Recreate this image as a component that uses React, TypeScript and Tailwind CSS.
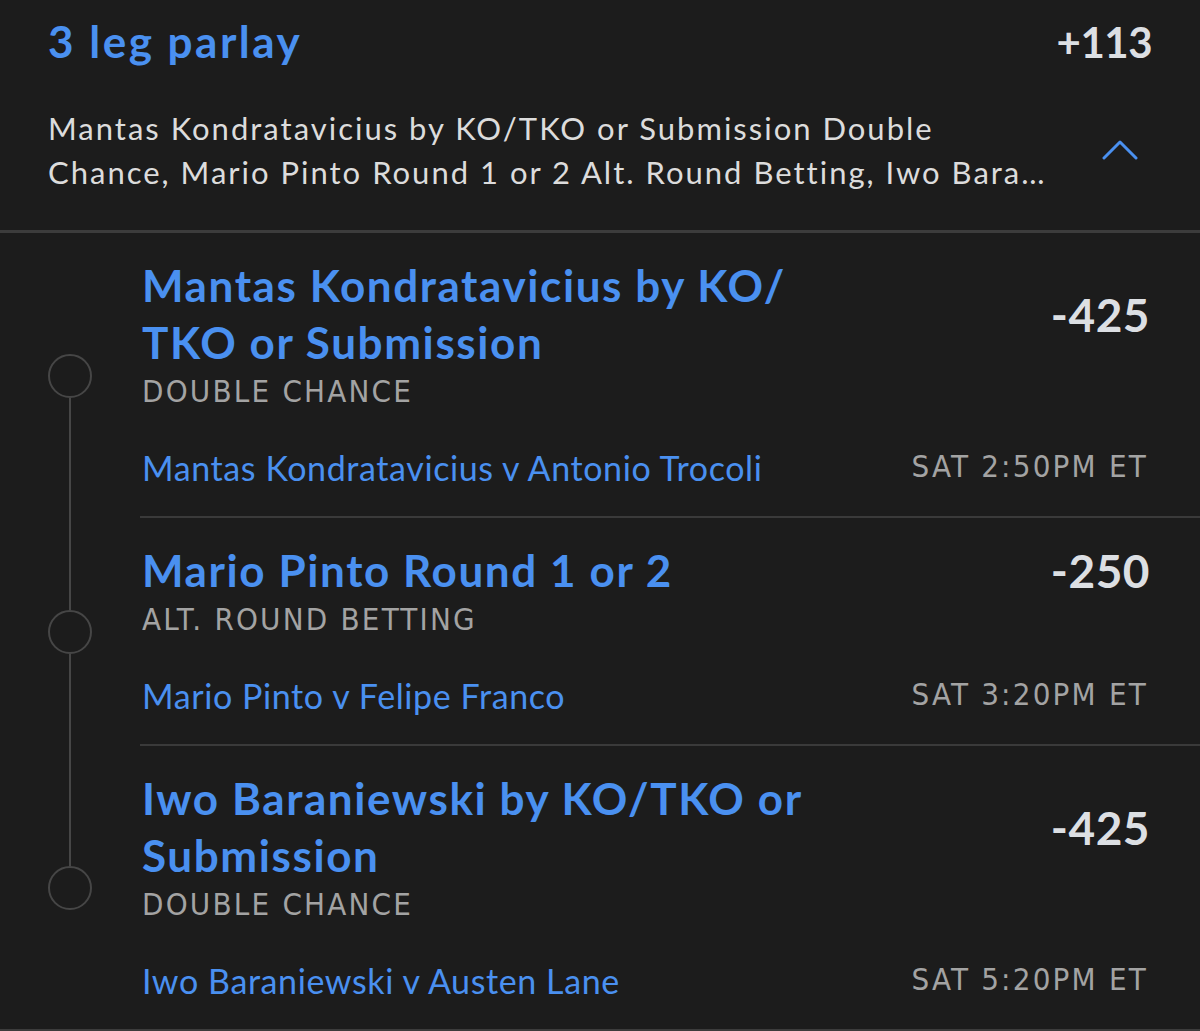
interface Leg {
  title: string;
  market: string;
  matchup: string;
  time: string;
  odds: string;
}

const legs: Leg[] = [
  {
    title: "Mantas Kondratavicius by KO/ TKO or Submission",
    market: "DOUBLE CHANCE",
    matchup: "Mantas Kondratavicius v Antonio Trocoli",
    time: "SAT 2:50PM ET",
    odds: "-425",
  },
  {
    title: "Mario Pinto Round 1 or 2",
    market: "ALT. ROUND BETTING",
    matchup: "Mario Pinto v Felipe Franco",
    time: "SAT 3:20PM ET",
    odds: "-250",
  },
  {
    title: "Iwo Baraniewski by KO/TKO or Submission",
    market: "DOUBLE CHANCE",
    matchup: "Iwo Baraniewski v Austen Lane",
    time: "SAT 5:20PM ET",
    odds: "-425",
  },
];

const LegRow = ({ leg, first, last }: { leg: Leg; first: boolean; last: boolean }) => {
  return (
    <div className="flex">
      <div className="w-[140px] shrink-0 flex flex-col items-center">
        <div className={`flex-1 w-[2px] ${first ? "" : "bg-[#464646]"}`}></div>
        <div className="w-[44px] h-[44px] rounded-full border-2 border-[#464646] shrink-0"></div>
        <div className={`flex-1 w-[2px] ${last ? "" : "bg-[#464646]"}`}></div>
      </div>
      <div
        className={`flex-1 pl-[2px] pt-6 pb-[28px] ${
          last ? "" : "border-b-2 border-[#3a3a3a]"
        }`}
      >
        <div className="flex items-center justify-between pr-[50px]">
          <div className="max-w-[700px] text-[44px] leading-[57px] font-bold tracking-[1.6px] text-[#4a90f0]">
            {leg.title}
          </div>
          <div className="text-[46px] leading-[57px] font-bold text-[#dcdfe3] tracking-[0.5px]">
            {leg.odds}
          </div>
        </div>
        <div className="mt-[2px] font-['DejaVu_Sans_Condensed',sans-serif] text-[31px] leading-[36px] tracking-[2.2px] text-[#a3a3a3]">
          {leg.market}
        </div>
        <div className="mt-[39px] flex items-end justify-between pr-[52px]">
          <div className="text-[34px] leading-[40px] tracking-[0.6px] text-[#4a90f0]">{leg.matchup}</div>
          <div className="mb-[4px] font-['DejaVu_Sans_Condensed',sans-serif] text-[31px] leading-[36px] tracking-[2.2px] text-[#a3a3a3]">
            {leg.time}
          </div>
        </div>
      </div>
    </div>
  );
};

export default function App() {
  return (
    <div className="w-[1200px] min-h-[1031px] bg-[#1c1c1c] font-['Lato',sans-serif]">
      <div className="px-12 pt-4 pb-[36px] border-b-[3px] border-[#3c3c3c]">
        <div className="flex items-baseline justify-between">
          <div className="text-[44px] leading-[50px] font-bold tracking-[2.5px] text-[#4a90f0]">3 leg parlay</div>
          <div className="text-[42px] leading-[50px] font-bold text-[#dcdfe3] tracking-[-0.5px]">+113</div>
        </div>
        <div className="mt-[39px] flex items-center">
          <div className="w-[1015px] shrink-0 text-[31px] leading-[44px] tracking-[2px] text-[#dcdcdc]">
            <div className="whitespace-nowrap">Mantas Kondratavicius by KO/TKO or Submission Double</div>
            <div className="truncate">
              Chance, Mario Pinto Round 1 or 2 Alt. Round Betting, Iwo Baraniewski by KO/TKO or
              Submission Double Chance
            </div>
          </div>
          <div className="flex-1 flex justify-end pr-[14px]">
            <svg width="36" height="20" viewBox="0 0 36 20" fill="none">
              <path
                d="M2 18 L18 2 L34 18"
                stroke="#4a90f0"
                strokeWidth="3"
                strokeLinecap="round"
                strokeLinejoin="round"
              />
            </svg>
          </div>
        </div>
      </div>
      <div className="border-b-[3px] border-[#3c3c3c]">
        {legs.map((leg, i) => (
          <LegRow key={i} leg={leg} first={i === 0} last={i === legs.length - 1} />
        ))}
      </div>
    </div>
  );
}
